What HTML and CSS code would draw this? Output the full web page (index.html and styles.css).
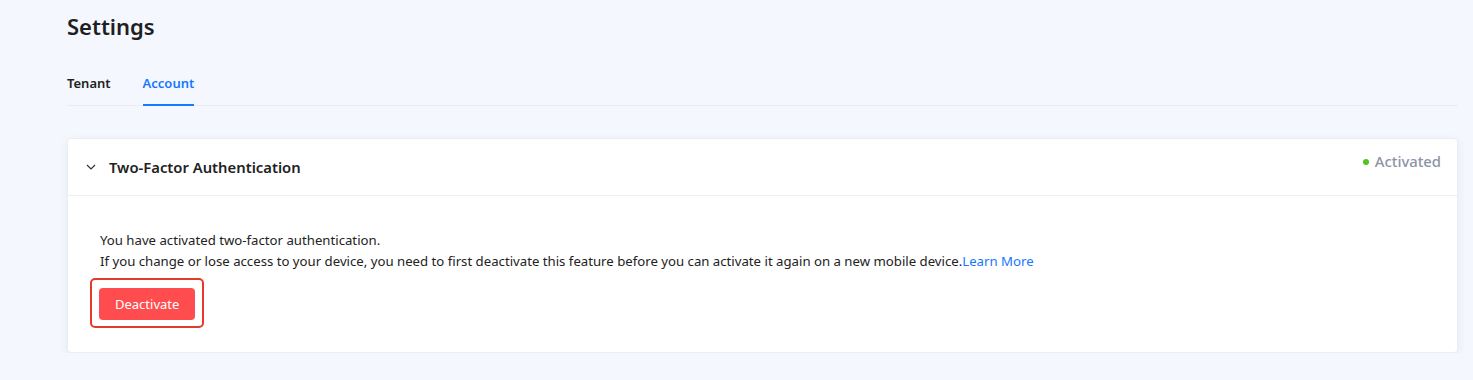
FILE: index.html
```html
<!DOCTYPE html>
<html lang="en">
<head>
    <meta charset="UTF-8">
    <meta name="viewport" content="width=device-width, initial-scale=1.0">
    <title>Settings</title>
    <link rel="stylesheet" href="styles.css">
</head>
<body>
    <div class="page">
        <h1 class="page-title">Settings</h1>
        <div class="tabs">
            <a class="tab" href="#">Tenant</a>
            <a class="tab active" href="#">Account</a>
        </div>

        <div class="panel">
            <div class="panel-header">
                <svg class="chevron" width="10" height="6" viewBox="0 0 10 6">
                    <path d="M1 1l4 4 4-4" fill="none" stroke="#333" stroke-width="1.2"/>
                </svg>
                <span class="panel-title">Two-Factor Authentication</span>
                <span class="status"><span class="dot"></span>Activated</span>
            </div>
            <div class="panel-body">
                <p>You have activated two-factor authentication.</p>
                <p>If you change or lose access to your device, you need to first deactivate this feature before you can activate it again on a new mobile device.<a href="#">Learn More</a></p>
                <div class="highlight">
                    <button type="button" class="btn-danger">Deactivate</button>
                </div>
            </div>
        </div>
    </div>
</body>
</html>
```

FILE: styles.css
```css
body {
    margin: 0;
    background-color: #f4f7fd;
    font-family: "Noto Sans", "Open Sans", sans-serif;
    color: #222;
}

.page {
    padding: 10px 15px 0 67px;
}

.page-title {
    margin: 0;
    font-size: 22px;
    font-weight: 600;
    line-height: 32px;
    color: #1f1f1f;
}

.tabs {
    display: flex;
    gap: 32px;
    margin-top: 25px;
    border-bottom: 1px solid #e9ecf1;
}

.tab {
    padding: 7px 0 12px;
    font-size: 13px;
    font-weight: 600;
    color: #222;
    text-decoration: none;
    border-bottom: 2px solid transparent;
    margin-bottom: -1px;
}

.tab.active {
    color: #1677ff;
    border-bottom-color: #1677ff;
}

.panel {
    margin-top: 32px;
    background: #fff;
    border: 1px solid #ebedf0;
    border-radius: 4px;
    box-shadow: 0 3px 10px rgba(30, 50, 120, 0.07);
}

.panel-header {
    display: flex;
    align-items: center;
    height: 56px;
    padding: 0 16px 0 18px;
    border-bottom: 1px solid #ebedf0;
}

.chevron {
    margin-right: 13px;
}

.panel-title {
    font-size: 14.8px;
    font-weight: 600;
    color: #222;
}

.status {
    margin-left: auto;
    align-self: flex-start;
    margin-top: 12px;
    display: flex;
    align-items: center;
    font-size: 14.8px;
    font-weight: 500;
    color: #8a94a6;
}

.dot {
    width: 6px;
    height: 6px;
    border-radius: 50%;
    background: #52c41a;
    margin-right: 6px;
    margin-top: 2px;
}

.panel-body {
    padding: 34px 32px 24px;
    font-size: 13.2px;
}

.panel-body p {
    margin: 0;
    line-height: 21px;
}

.panel-body a {
    color: #1677ff;
    text-decoration: none;
}

.highlight {
    display: inline-block;
    margin: 6px 0 0 -10px;
    padding: 8px 7px 6px;
    border: 2px solid #e5392b;
    border-radius: 5px;
}

.btn-danger {
    display: block;
    height: 32px;
    padding: 0 16px;
    background-color: #ff4d4f;
    color: #fff;
    border: none;
    border-radius: 4px;
    font-family: inherit;
    font-size: 13px;
    cursor: pointer;
}
```
